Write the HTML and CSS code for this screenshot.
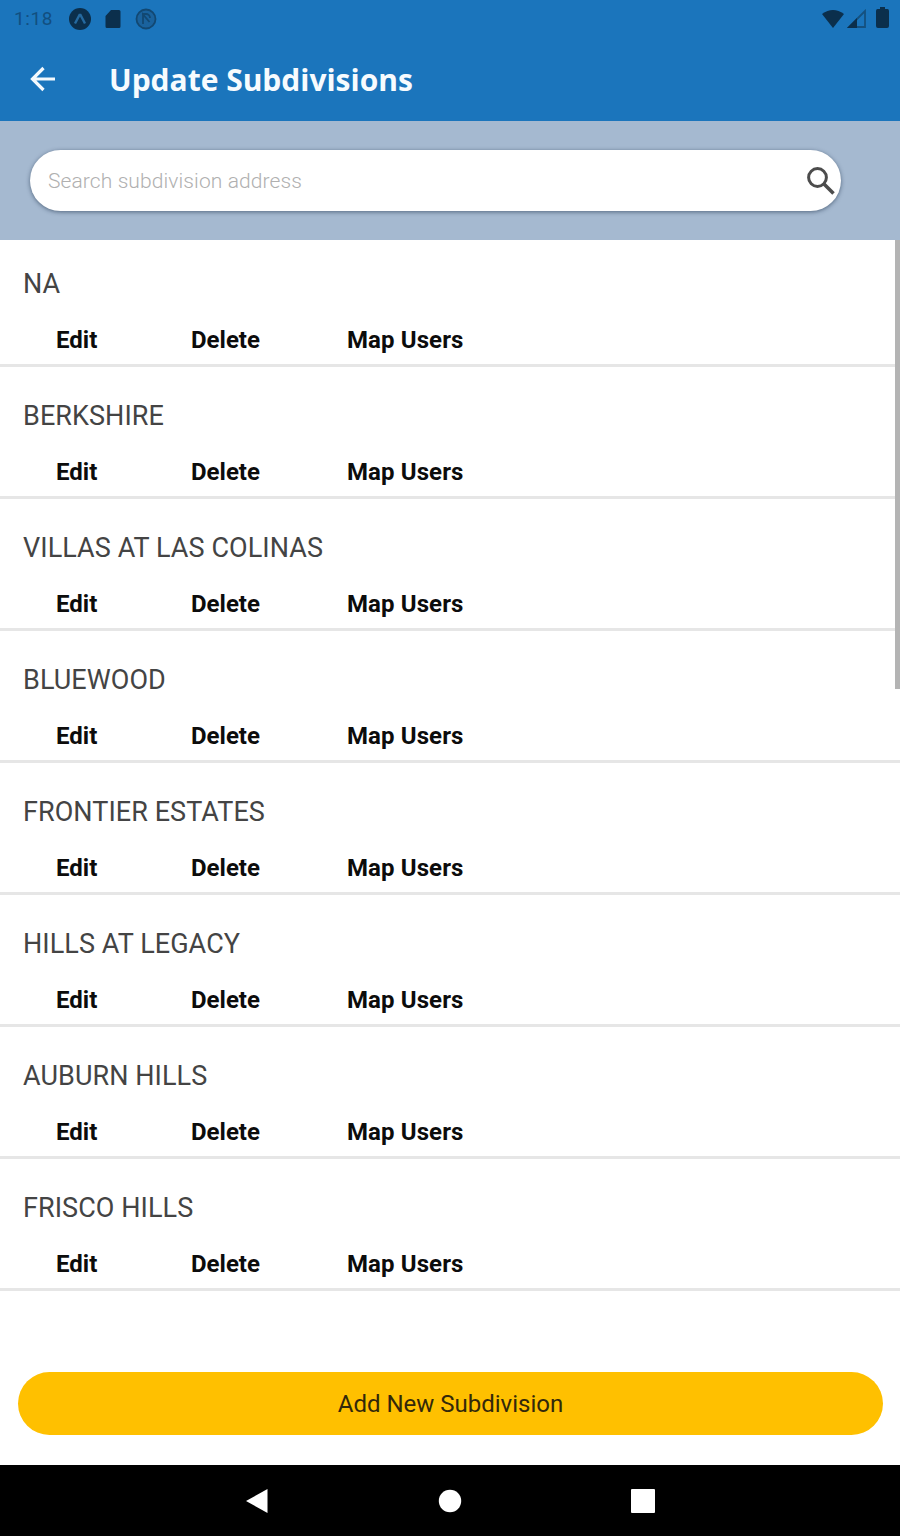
FILE: index.html
```html
<!DOCTYPE html>
<html lang="en">
<head>
<meta charset="utf-8">
<title>Update Subdivisions</title>
<link rel="stylesheet" href="styles.css">
</head>
<body>
<div class="screen">
  <header class="top">
    <div class="status">
      <span class="clock">1:18</span>
      <svg class="st-a" width="24" height="24" viewBox="0 0 24 24"><circle cx="12" cy="12" r="11" fill="#0b2f4c"/><path d="M7 16.500 11.500 8h1l4.500 8.500" fill="none" stroke="#25699f" stroke-width="2.400"/></svg>
      <svg class="st-sd" width="16" height="20" viewBox="0 0 16 20"><path d="M6 1h8a1.500 1.500 0 0 1 1.500 1.500v15A1.500 1.500 0 0 1 14 19H2A1.500 1.500 0 0 1 .5 17.500V7z" fill="#0b2f4c"/></svg>
      <svg class="st-n" width="22" height="22" viewBox="0 0 22 22"><circle cx="11" cy="11" r="9.500" fill="#1a629d" stroke="#124872" stroke-width="1.800"/><path d="M8 16V6.500L14.500 14M7 6h4a4 4 0 0 1 4 4" fill="none" stroke="#124872" stroke-width="1.800"/></svg>
      <span class="spacer"></span>
      <svg class="st-wifi" width="24" height="20" viewBox="0 0 24 20"><path d="M1 5Q12-3 23 5L12 19z" fill="#0b2f4c"/></svg>
      <svg class="st-cell" width="20" height="20" viewBox="0 0 20 20"><path d="M2 18 18 2V18z" fill="none" stroke="#15517f" stroke-width="1.800"/><path d="M0 19 10 9V19z" fill="#0b2f4c"/></svg>
      <svg class="st-bat" width="13" height="21" viewBox="0 0 13 21"><path d="M4 0h5v2h2.500Q13 2 13 4v15q0 2-2 2H2q-2 0-2-2V4q0-2 1.500-2H4z" fill="#0b2f4c"/></svg>
    </div>
    <div class="appbar">
      <svg class="back" width="26" height="26" viewBox="0 0 26 26"><path d="M25 13H3M13.500 2 2.500 13l11 11" fill="none" stroke="#f4f9fd" stroke-width="3.200"/></svg>
      <h1 class="title">Update Subdivisions</h1>
    </div>
  </header>
  <div class="searchband">
    <div class="search">
      <span class="placeholder">Search subdivision address</span>
      <svg class="lens" width="30" height="30" viewBox="0 0 30 30"><circle cx="11.500" cy="11.500" r="8.900" fill="none" stroke="#4c4c4c" stroke-width="3"/><path d="M18 18l9.500 9.500" stroke="#4c4c4c" stroke-width="3.600"/></svg>
    </div>
  </div>
  <main class="list">
    <div class="scrollbar"></div>
    <section class="row"><h2 class="name">NA</h2><div class="actions"><span class="edit">Edit</span><span class="delete">Delete</span><span class="map">Map Users</span></div></section>
    <section class="row"><h2 class="name">BERKSHIRE</h2><div class="actions"><span class="edit">Edit</span><span class="delete">Delete</span><span class="map">Map Users</span></div></section>
    <section class="row"><h2 class="name">VILLAS AT LAS COLINAS</h2><div class="actions"><span class="edit">Edit</span><span class="delete">Delete</span><span class="map">Map Users</span></div></section>
    <section class="row"><h2 class="name">BLUEWOOD</h2><div class="actions"><span class="edit">Edit</span><span class="delete">Delete</span><span class="map">Map Users</span></div></section>
    <section class="row"><h2 class="name">FRONTIER ESTATES</h2><div class="actions"><span class="edit">Edit</span><span class="delete">Delete</span><span class="map">Map Users</span></div></section>
    <section class="row"><h2 class="name">HILLS AT LEGACY</h2><div class="actions"><span class="edit">Edit</span><span class="delete">Delete</span><span class="map">Map Users</span></div></section>
    <section class="row"><h2 class="name">AUBURN HILLS</h2><div class="actions"><span class="edit">Edit</span><span class="delete">Delete</span><span class="map">Map Users</span></div></section>
    <section class="row"><h2 class="name">FRISCO HILLS</h2><div class="actions"><span class="edit">Edit</span><span class="delete">Delete</span><span class="map">Map Users</span></div></section>
  </main>
  <div class="footer"><button class="add">Add New Subdivision</button></div>
  <nav class="nav">
    <svg width="24" height="26" viewBox="0 0 24 26"><path d="M1 13 22.500 1v24z" fill="#fff"/></svg>
    <svg width="24" height="24" viewBox="0 0 24 24"><circle cx="12" cy="12" r="11.200" fill="#fff"/></svg>
    <svg width="24" height="24" viewBox="0 0 24 24"><rect width="24" height="24" rx="1" fill="#fff"/></svg>
  </nav>
</div>
</body>
</html>
```
FILE: styles.css
```css
* { box-sizing: border-box; }
body { margin: 0; font-family: Roboto, "Liberation Sans", sans-serif; background: #fff; }
.screen { width: 900px; height: 1536px; display: flex; flex-direction: column; overflow: hidden; }
.top { height: 121px; background: #1b75bc; }
.status { height: 38px; display: flex; align-items: center; padding: 0 11px 0 14px; }
.clock { width: 54px; font-size: 19px; line-height: 22px; padding-bottom: 1px; letter-spacing: 0.6px; color: #124f80; }
.st-sd { margin-left: 13px; }
.st-n { margin-left: 14px; }
.spacer { flex: 1; }
.st-wifi { margin-right: 2px; }
.st-cell { margin-right: 9px; }
.status .st-bat { margin-top: -4px; }
.appbar { height: 83px; display: flex; align-items: center; padding: 0 0 2px 30px; }
.back { margin-right: 53px; }
.title { margin: 0; padding-top: 2px; font: 700 30px/40px "Open Sans", sans-serif; letter-spacing: -0.02px; color: #f7fbfe; }
.searchband { height: 119px; background: #a5b9d0; padding: 29px 30px; }
.search { width: 811px; height: 61px; border-radius: 31px; background: #fff; display: flex; align-items: center; justify-content: space-between; padding: 0 5px 0 18px; box-shadow: 0 1px 4px rgba(40, 60, 85, 0.65); }
.placeholder { padding-top: 1px; font-size: 21px; font-weight: 300; letter-spacing: 0.1px; color: #b0b0b0; }
.list { position: relative; height: 1051px; }
.scrollbar { position: absolute; right: 0; top: 0; width: 5px; height: 449px; background: #b4b4b4; }
.row { height: 132px; padding-top: 33px; border-bottom: 3px solid #e6e6e6; }
.row:first-of-type { height: 127px; padding-top: 28px; }
.name { margin: 0; padding-left: 23px; font-size: 27px; line-height: 32px; font-weight: 400; letter-spacing: 0.06px; color: #444; }
.actions { display: grid; grid-template-columns: 135px 156px 200px; padding-left: 56px; margin-top: 25px; font-size: 24px; line-height: 30px; font-weight: 700; color: #0c0c0c; }
.map { letter-spacing: 0.1px; }
.footer { flex: 1; padding: 81px 17px 0 18px; }
.add { display: block; width: 100%; height: 63px; border: 0; border-radius: 32px; background: #ffc000; font: 400 24px/30px Roboto, sans-serif; color: #33280a; }
.nav { height: 71px; background: #000; display: flex; align-items: center; padding: 0 245px; justify-content: space-between; }
```
